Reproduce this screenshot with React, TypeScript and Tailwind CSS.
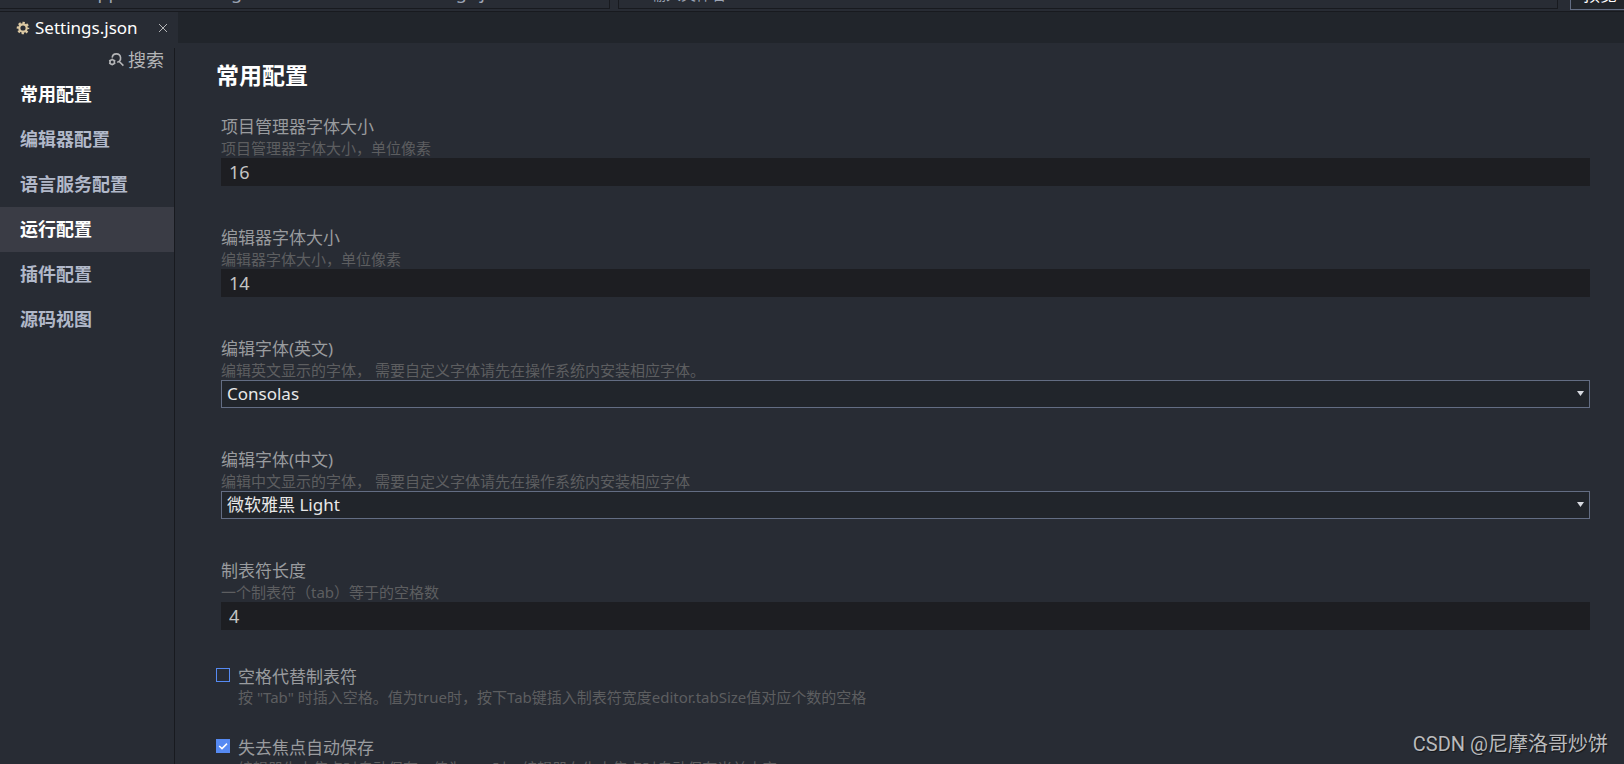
import { useState } from "react";
import type { ReactNode } from "react";

const NAV = [
  { name: "常用配置", tone: "text-white" },
  { name: "编辑器配置", tone: "text-[#b1b8c9]" },
  { name: "语言服务配置", tone: "text-[#b1b8c9]" },
  { name: "运行配置", tone: "bg-[#3a3c45] text-white" },
  { name: "插件配置", tone: "text-[#b1b8c9]" },
  { name: "源码视图", tone: "text-[#b1b8c9]" },
];

function GearIcon() {
  return (
    <svg viewBox="0 0 14 14" className="size-3.5 shrink-0" aria-hidden="true">
      <circle cx="7" cy="7" r="5.2" fill="none" stroke="#dcc9a3" strokeWidth="2.2" strokeDasharray="2.3 1.784" strokeDashoffset="1.15" />
      <circle cx="7" cy="7" r="3.7" fill="none" stroke="#dcc9a3" strokeWidth="2.2" />
    </svg>
  );
}

function SearchIcon() {
  return (
    <svg viewBox="0 0 16 16" className="size-4 shrink-0" fill="none" stroke="#b4b5b7" aria-hidden="true">
      <path d="M4.2 5.6A4.2 4.2 0 1 1 9.2 10.2M11 9.2L15.4 13.6" strokeWidth="1.6" />
      <circle cx="4.2" cy="10" r="2.3" strokeWidth="1.6" />
      <path d="M4.2 6.4V8M4.2 12v1.6M1.1 8.2l1.3.8M7.3 8.2L6 9M1.1 11.8l1.3-.8M7.3 11.8L6 11" strokeWidth="1.2" />
    </svg>
  );
}

function Field({ id, label, hint, children }: { id: string; label: string; hint: string; children: ReactNode }) {
  return (
    <div className="pl-[5px]">
      <label htmlFor={id} className="block pt-1 text-[17px] leading-[23px] text-[#999b9e]">{label}</label>
      <p className="h-5 text-[15px] leading-5 whitespace-pre text-[#5d5e60]">{hint}</p>
      {children}
    </div>
  );
}

function NumberField({ id, label, hint, value }: { id: string; label: string; hint: string; value: string }) {
  return (
    <Field id={id} label={label} hint={hint}>
      <input id={id} type="text" defaultValue={value} className="block h-7 w-full bg-[#1d1e22] px-2 text-[18px] text-[#c4c4c4] outline-none" />
    </Field>
  );
}

function SelectField({ id, label, hint, value }: { id: string; label: string; hint: string; value: string }) {
  return (
    <Field id={id} label={label} hint={hint}>
      <div className="relative">
        <select id={id} defaultValue={value} className="block h-7 w-full appearance-none border border-[#636d83] bg-[#21252b] px-[5px] text-[17px] leading-6 text-[#e8e8e8] outline-none">
          <option>{value}</option>
        </select>
        <svg viewBox="0 0 7 5" className="pointer-events-none absolute top-[11px] right-1.5 h-[5px] w-[7px]" aria-hidden="true">
          <path d="M0 0H7L3.5 5Z" fill="#d7dae0" />
        </svg>
      </div>
    </Field>
  );
}

function CheckField({ id, label, hint, initial }: { id: string; label: string; hint: string; initial: boolean }) {
  const [checked, setChecked] = useState(initial);
  return (
    <div className="mb-[26px] flex gap-2">
      <span className="relative mt-[7px] size-3.5 shrink-0">
        <input
          id={id}
          type="checkbox"
          checked={checked}
          onChange={(e) => setChecked(e.target.checked)}
          className="block size-3.5 appearance-none border border-[#568af2] checked:bg-[#568af2]"
        />
        {checked && (
          <svg viewBox="0 0 14 14" className="pointer-events-none absolute inset-0 size-3.5" fill="none" stroke="#fff" strokeWidth="1.5" aria-hidden="true">
            <path d="M3.2 7L6 9.6L11 4.6" />
          </svg>
        )}
      </span>
      <div>
        <label htmlFor={id} className="block pt-1 text-[17px] leading-[23px] text-[#999b9e]">{label}</label>
        <p className="h-[18px] text-[15px] leading-[18px] whitespace-pre text-[#5d5e60]">{hint}</p>
      </div>
    </div>
  );
}

export default function App() {
  return (
    <div className="relative flex h-screen flex-col overflow-hidden bg-[#282c34] font-['Noto_Sans','Noto_Sans_CJK_SC',sans-serif]">
      <header className="flex h-3 shrink-0 items-end overflow-hidden border-b border-[#181a1f] text-[18px] leading-6 text-[#9da5b4]">
        <div className="mb-0.5 flex h-6 w-[610px] shrink-0 items-end border-r border-b border-[#181a1f] pb-1 pl-[86px]">
          <span className="w-[321px]">AppData/Roaming</span>
          <span>Settings.json</span>
        </div>
        <div className="mb-0.5 ml-2 flex h-6 grow items-end border border-[#181a1f] pb-0.5 pl-8 text-[15px]">输入文件名</div>
        <button className="mb-px ml-3 flex h-6 w-[54px] shrink-0 items-end border border-r-0 border-[#636d83] bg-[#21252b] pb-0.5 pl-3 text-[17px] leading-6 whitespace-nowrap text-white">预览</button>
      </header>

      <div className="flex h-[31px] shrink-0 bg-[#21252b]">
        <div className="flex w-[178px] items-center bg-[#282c34] pl-4">
          <GearIcon />
          <span className="ml-[5px] grow text-[17px] leading-[31px] text-white">Settings.json</span>
          <button aria-label="关闭" className="mr-2.5 flex size-2.5 items-center">
            <svg viewBox="0 0 10 10" className="size-2.5" stroke="#b4b5b7" aria-hidden="true">
              <path d="M1 1L9 9M9 1L1 9" />
            </svg>
          </button>
        </div>
      </div>

      <div className="flex min-h-0 grow">
        <nav className="mt-[5px] w-[175px] shrink-0 border-r border-[#181a1f]">
          <button className="flex h-6 w-full items-center justify-end gap-1 pr-2.5 text-[18px] leading-6 text-[#b4b5b7]">
            <SearchIcon />
            搜索
          </button>
          {NAV.map((item) => (
            <a key={item.name} href="#" className={`block h-[45px] pl-5 text-[18px] leading-[45px] font-bold ${item.tone}`}>
              {item.name}
            </a>
          ))}
        </nav>
        <main className="min-w-0 grow pr-[34px] pl-[41px]">
          <h1 className="pt-[18px] pb-[22px] text-[23px] leading-7 font-bold text-white">常用配置</h1>
          <div className="mb-[31px] flex flex-col gap-9">
            <NumberField id="manager-font" label="项目管理器字体大小" hint="项目管理器字体大小，单位像素" value="16" />
            <NumberField id="editor-font" label="编辑器字体大小" hint="编辑器字体大小，单位像素" value="14" />
            <SelectField id="font-en" label="编辑字体(英文)" hint="编辑英文显示的字体， 需要自定义字体请先在操作系统内安装相应字体。" value="Consolas" />
            <SelectField id="font-zh" label="编辑字体(中文)" hint="编辑中文显示的字体， 需要自定义字体请先在操作系统内安装相应字体" value="微软雅黑 Light" />
            <NumberField id="tab-size" label="制表符长度" hint="一个制表符（tab）等于的空格数" value="4" />
          </div>
          <CheckField id="use-spaces" label="空格代替制表符" hint={'按 "Tab" 时插入空格。值为true时，按下Tab键插入制表符宽度editor.tabSize值对应个数的空格'} initial={false} />
          <CheckField id="auto-save" label="失去焦点自动保存" hint="编辑器失去焦点时自动保存。值为true时，编辑器在失去焦点时自动保存当前内容" initial />
        </main>
      </div>
      <footer className="absolute right-4 bottom-1.5 font-[Roboto,'Noto_Sans_CJK_SC',sans-serif] text-[20px] leading-7 text-[#b9babc] [text-shadow:1px_1px_1px_#00000080]">
        CSDN @尼摩洛哥炒饼
      </footer>
    </div>
  );
}
